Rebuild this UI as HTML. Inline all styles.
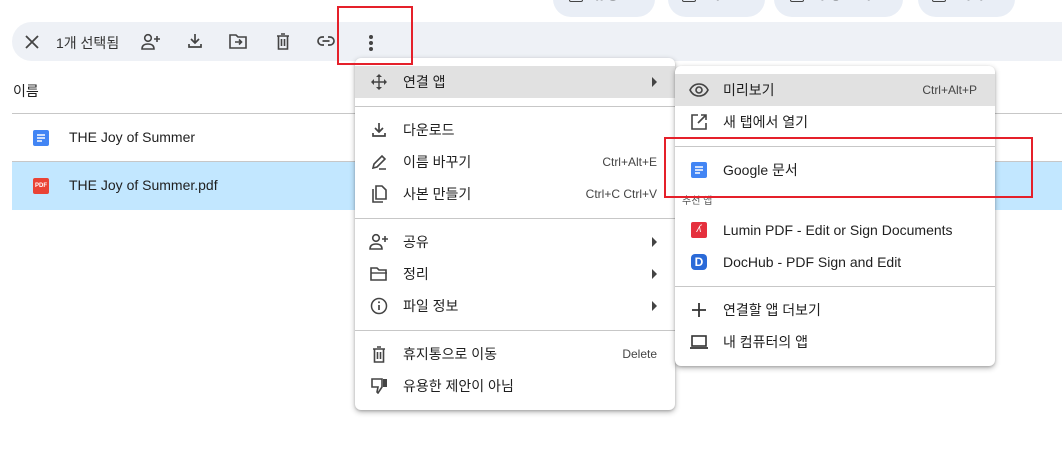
<!DOCTYPE html>
<html><head><meta charset="utf-8"><style>
*{box-sizing:border-box;margin:0;padding:0}
body{width:1062px;height:459px;overflow:hidden;background:#fff;font-family:"Liberation Sans","Noto Sans CJK KR",sans-serif;color:#1f1f1f;position:relative;font-size:14px}
.abs{position:absolute}
.chip{position:absolute;top:-20px;height:37px;background:#e9eef6;border-radius:18px;font-size:14px;color:#333}
.chip .b{position:absolute;top:8px;width:14px;height:14px;border:1.6px solid #444;border-radius:2px}
.chip .l{position:absolute;top:4px;font-weight:bold}
.chip .d{position:absolute;top:12px;width:0;height:0;border-top:5px solid #444;border-left:5px solid transparent;border-right:5px solid transparent}
.tb{left:12px;top:22px;width:1100px;height:39px;background:#eef1f6;border-radius:20px}
.menu{position:absolute;background:#fff;border-radius:6px;box-shadow:0 2px 6px rgba(0,0,0,.3),0 1px 2px rgba(0,0,0,.15)}
.it{position:absolute;left:0;right:0;height:32px;display:flex;align-items:center;font-size:14px}
.it .ic{position:absolute;left:14px;width:20px;height:20px;display:flex;align-items:center;justify-content:center}
.it .t{position:absolute;left:48px}
.it .k{position:absolute;right:18px;font-size:12px;color:#444}
.it .ar{position:absolute;right:18px;width:0;height:0;border-left:5px solid #444;border-top:5px solid transparent;border-bottom:5px solid transparent}
.sep{position:absolute;left:0;right:0;height:1px;background:#c7c7c7}
.red{position:absolute;border:2px solid #e5202a}
svg{display:block}
</style></head><body>
<div class="chip" style="left:553px;width:102px"><span class="b" style="left:16px"></span><span class="l" style="left:40px">유형</span><span class="d" style="left:80px"></span></div>
<div class="chip" style="left:668px;width:97px"><span class="b" style="left:14px;border-radius:7px 7px 2px 2px"></span><span class="l" style="left:40px">사람</span><span class="d" style="left:76px"></span></div>
<div class="chip" style="left:774px;width:129px"><span class="b" style="left:16px"></span><span class="l" style="left:42px">수정 날짜</span><span class="d" style="left:108px"></span></div>
<div class="chip" style="left:918px;width:97px"><span class="b" style="left:14px"></span><span class="l" style="left:40px">위치</span><span class="d" style="left:76px"></span></div>
<div class="abs tb"></div>
<svg class="abs" style="left:25px;top:35px" width="14" height="14" viewBox="0 0 14 14"><path d="M1 1L13 13M13 1L1 13" stroke="#444" stroke-width="1.8"/></svg>
<div class="abs" style="left:56px;top:33px;font-size:14px;color:#333">1개 선택됨</div>
<svg class="abs" style="left:141px;top:33px" width="20" height="18" viewBox="0 0 20 18"><circle cx="7" cy="5" r="3.3" fill="none" stroke="#444" stroke-width="1.6"/><path d="M1 16c0-4 3-5 6-5s6 1 6 5z" fill="none" stroke="#444" stroke-width="1.6"/><path d="M16 3v6M13 6h6" stroke="#444" stroke-width="1.6"/></svg>
<svg class="abs" style="left:187px;top:33px" width="16" height="16" viewBox="0 0 16 16"><path d="M8 1v9M4 6l4 4 4-4M2 11v3h12v-3" fill="none" stroke="#444" stroke-width="1.7"/></svg>
<svg class="abs" style="left:229px;top:33px" width="18" height="16" viewBox="0 0 18 16"><path d="M1 2h6l2 2h8v11H1z" fill="none" stroke="#444" stroke-width="1.6"/><path d="M6 9h6M10 6.5l2.5 2.5L10 11.5" fill="none" stroke="#444" stroke-width="1.6"/></svg>
<svg class="abs" style="left:276px;top:33px" width="14" height="17" viewBox="0 0 14 17"><path d="M1 3h12M5 1h4M2.5 3v13h9V3M5.5 6v7M8.5 6v7" fill="none" stroke="#444" stroke-width="1.6"/></svg>
<svg class="abs" style="left:317px;top:36px" width="18" height="10" viewBox="0 0 18 10"><path d="M7 1H5a4 4 0 000 8h2M11 1h2a4 4 0 010 8h-2M5.5 5h7" fill="none" stroke="#444" stroke-width="1.7"/></svg>
<div class="abs" style="left:369px;top:35px;width:4px;height:4px;border-radius:2px;background:#444;box-shadow:0 6px 0 #444,0 12px 0 #444"></div>
<div class="abs" style="left:13px;top:81px;font-size:14px">이름</div>
<div class="abs" style="left:12px;top:113px;width:1050px;height:1px;background:#c7c7c7"></div>
<div class="abs" style="left:12px;top:161px;width:1050px;height:1px;background:#c7c7c7"></div>
<div class="abs" style="left:12px;top:162px;width:1050px;height:48px;background:#c2e7ff"></div>
<svg class="abs" style="left:33px;top:130px" width="16" height="16" viewBox="0 0 16 16"><rect x="0" y="0" width="16" height="16" rx="2" fill="#4285f4"/><path d="M4 5h8M4 8h8M4 11h5" stroke="#fff" stroke-width="1.5"/></svg>
<div class="abs" style="left:69px;top:129px;font-size:14px">THE Joy of Summer</div>
<div class="abs" style="left:33px;top:178px;width:16px;height:16px;background:#ea4335;border-radius:2px;color:#fff;font-size:6px;font-weight:bold;line-height:16px;text-align:center">PDF</div>
<div class="abs" style="left:69px;top:177px;font-size:14px">THE Joy of Summer.pdf</div>

<div class="menu" style="left:355px;top:58px;width:320px;height:352px">
 <div class="it" style="top:8px;background:#e1e1e1"><div class="ic"><svg width="18" height="18" viewBox="0 0 18 18"><path d="M9 1l3 3H6zM9 17l3-3H6zM1 9l3-3v6zM17 9l-3-3v6z" fill="#444"/><path d="M9 4v10M4 9h10" stroke="#444" stroke-width="1.4"/></svg></div><span class="t">연결 앱</span><span class="ar"></span></div>
 <div class="sep" style="top:48px"></div>
 <div class="it" style="top:56px"><div class="ic"><svg width="16" height="16" viewBox="0 0 16 16"><path d="M8 1v9M4 6l4 4 4-4M2 11v3h12v-3" fill="none" stroke="#444" stroke-width="1.7"/></svg></div><span class="t">다운로드</span></div>
 <div class="it" style="top:88px"><div class="ic"><svg width="16" height="16" viewBox="0 0 16 16"><path d="M2 14l1-4 8-8 3 3-8 8zM8 15h7" fill="none" stroke="#444" stroke-width="1.6"/></svg></div><span class="t">이름 바꾸기</span><span class="k">Ctrl+Alt+E</span></div>
 <div class="it" style="top:120px"><div class="ic"><svg width="16" height="18" viewBox="0 0 16 18"><path d="M5 1h6l4 4v9H5zM2 4v13h10" fill="none" stroke="#444" stroke-width="1.6"/></svg></div><span class="t">사본 만들기</span><span class="k">Ctrl+C Ctrl+V</span></div>
 <div class="sep" style="top:160px"></div>
 <div class="it" style="top:168px"><div class="ic"><svg width="20" height="18" viewBox="0 0 20 18"><circle cx="7" cy="5" r="3.3" fill="none" stroke="#444" stroke-width="1.6"/><path d="M1 16c0-4 3-5 6-5s6 1 6 5z" fill="none" stroke="#444" stroke-width="1.6"/><path d="M16 3v6M13 6h6" stroke="#444" stroke-width="1.6"/></svg></div><span class="t">공유</span><span class="ar"></span></div>
 <div class="it" style="top:200px"><div class="ic"><svg width="18" height="14" viewBox="0 0 18 14"><path d="M1 1h6l2 2h7v10H1z" fill="none" stroke="#444" stroke-width="1.6"/><path d="M1 6h16" stroke="#444" stroke-width="1.4"/></svg></div><span class="t">정리</span><span class="ar"></span></div>
 <div class="it" style="top:232px"><div class="ic"><svg width="18" height="18" viewBox="0 0 18 18"><circle cx="9" cy="9" r="7.5" fill="none" stroke="#444" stroke-width="1.5"/><path d="M9 8v5" stroke="#444" stroke-width="1.7"/><circle cx="9" cy="5.3" r="1" fill="#444"/></svg></div><span class="t">파일 정보</span><span class="ar"></span></div>
 <div class="sep" style="top:272px"></div>
 <div class="it" style="top:280px"><div class="ic"><svg width="14" height="17" viewBox="0 0 14 17"><path d="M1 3h12M5 1h4M2.5 3v13h9V3M5.5 6v7M8.5 6v7" fill="none" stroke="#444" stroke-width="1.6"/></svg></div><span class="t">휴지통으로 이동</span><span class="k">Delete</span></div>
 <div class="it" style="top:312px"><div class="ic"><svg width="18" height="16" viewBox="0 0 18 16"><path d="M2 1h10v8l-4 6-1-1 1-5H2z" fill="none" stroke="#444" stroke-width="1.6"/><rect x="13" y="1" width="4" height="8" fill="#444"/></svg></div><span class="t">유용한 제안이 아님</span></div>
</div>

<div class="menu" style="left:675px;top:66px;width:320px;height:300px">
 <div class="it" style="top:8px;background:#e1e1e1"><div class="ic"><svg width="20" height="14" viewBox="0 0 20 14"><path d="M1 7c2-4 5-6 9-6s7 2 9 6c-2 4-5 6-9 6S3 11 1 7z" fill="none" stroke="#444" stroke-width="1.6"/><circle cx="10" cy="7" r="3" fill="none" stroke="#444" stroke-width="1.6"/></svg></div><span class="t">미리보기</span><span class="k">Ctrl+Alt+P</span></div>
 <div class="it" style="top:40px"><div class="ic"><svg width="16" height="16" viewBox="0 0 16 16"><path d="M7 1H1v14h14V9M10 1h5v5M15 1L7 9" fill="none" stroke="#444" stroke-width="1.6"/></svg></div><span class="t">새 탭에서 열기</span></div>
 <div class="sep" style="top:80px"></div>
 <div class="it" style="top:88px"><div class="ic"><svg width="16" height="16" viewBox="0 0 16 16"><rect width="16" height="16" rx="2" fill="#4285f4"/><path d="M4 5h8M4 8h8M4 11h5" stroke="#fff" stroke-width="1.5"/></svg></div><span class="t">Google 문서</span></div>
 <div class="abs" style="left:7px;top:126px;font-size:10px;color:#555">추천 앱</div>
 <div class="it" style="top:148px"><div class="ic"><div style="width:16px;height:16px;background:#e5303d;border-radius:2px;color:#fff;font-size:10px;line-height:16px;text-align:center;font-style:italic">ʎ</div></div><span class="t">Lumin PDF - Edit or Sign Documents</span></div>
 <div class="it" style="top:180px"><div class="ic"><div style="width:16px;height:16px;background:#2a6ad8;border-radius:4px;color:#fff;font-size:12px;font-weight:bold;line-height:16px;text-align:center">D</div></div><span class="t">DocHub - PDF Sign and Edit</span></div>
 <div class="sep" style="top:220px"></div>
 <div class="it" style="top:228px"><div class="ic"><svg width="14" height="14" viewBox="0 0 14 14"><path d="M7 0v14M0 7h14" stroke="#333" stroke-width="1.8"/></svg></div><span class="t">연결할 앱 더보기</span></div>
 <div class="it" style="top:260px"><div class="ic"><svg width="20" height="14" viewBox="0 0 20 14"><rect x="3" y="1" width="14" height="10" fill="none" stroke="#333" stroke-width="1.6"/><path d="M1 13h18" stroke="#333" stroke-width="1.8"/></svg></div><span class="t">내 컴퓨터의 앱</span></div>
</div>

<div class="red" style="left:337px;top:6px;width:76px;height:59px"></div>
<div class="red" style="left:664px;top:137px;width:369px;height:61px"></div>
</body></html>
